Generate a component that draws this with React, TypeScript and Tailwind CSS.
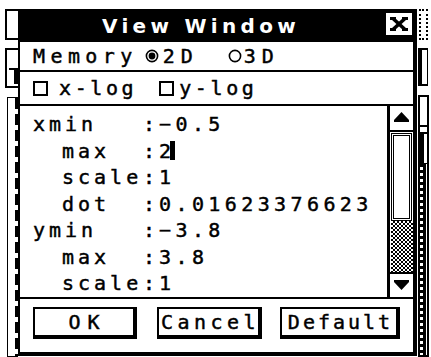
import React from "react";

const mono = "font-['DejaVu_Sans_Mono',monospace] [-webkit-text-stroke:0.45px_black]";

type Row = { label: string; indent: boolean; value: string; cursor?: boolean };

const rows: Row[] = [
  { label: "xmin", indent: false, value: "−0.5" },
  { label: "max", indent: true, value: "2", cursor: true },
  { label: "scale", indent: true, value: "1" },
  { label: "dot", indent: true, value: "0.01623376623" },
  { label: "ymin", indent: false, value: "−3.8" },
  { label: "max", indent: true, value: "3.8" },
  { label: "scale", indent: true, value: "1" },
];

function Radio({ on }: { on: boolean }) {
  return (
    <svg width="14" height="14" viewBox="0 0 14 14" className="shrink-0">
      <circle cx="7" cy="7" r="5.6" fill="white" stroke="black" strokeWidth="1.6" />
      {on && <circle cx="7" cy="7" r="3.4" fill="black" />}
    </svg>
  );
}

function CloseBox() {
  return (
    <div className="mt-[4px] mr-[1px] w-[26px] h-[22px] bg-white shrink-0">
      <svg width="26" height="22" viewBox="0 0 26 22">
        <line x1="7" y1="5.5" x2="19" y2="16.5" stroke="black" strokeWidth="3.6" />
        <line x1="19" y1="5.5" x2="7" y2="16.5" stroke="black" strokeWidth="3.6" />
        <rect x="4" y="4" width="6" height="3" fill="black" />
        <rect x="16" y="4" width="6" height="3" fill="black" />
        <rect x="4" y="15" width="6" height="3" fill="black" />
        <rect x="16" y="15" width="6" height="3" fill="black" />
      </svg>
    </div>
  );
}

function Scrollbar() {
  return (
    <div className="w-[26px] shrink-0 border-l-[3px] border-black flex flex-col">
      <div className="h-[26px] border-b-2 border-black shrink-0">
        <svg width="23" height="24" viewBox="0 0 23 24">
          <polygon points="11.5,6 19,14 4,14" fill="black" />
          <rect x="4" y="14" width="15" height="2" fill="black" />
        </svg>
      </div>
      <div className="flex-1 flex flex-col">
        <div className="h-[88px] ml-[1px] mr-[1px] mt-[1px] border border-black p-[1px] shrink-0">
          <div className="h-full border border-black bg-white" />
        </div>
        <div className="flex-1 ml-[1px] bg-[image:repeating-conic-gradient(#000_0_25%,#fff_0_50%)] bg-[length:4px_4px]" />
      </div>
      <div className="h-[25px] border-t-2 border-black shrink-0">
        <svg width="23" height="23" viewBox="0 0 23 23">
          <rect x="4" y="6" width="15" height="2" fill="black" />
          <polygon points="4,8 19,8 11.5,16" fill="black" />
        </svg>
      </div>
    </div>
  );
}

function Button({ label, w, track, ml }: { label: string; w: string; track: string; ml: string }) {
  return (
    <div
      className={`${w} ${ml} h-[32px] border-t-2 border-l-2 border-r-4 border-b-4 border-black flex items-center justify-center shrink-0`}
    >
      <span className={`${mono} text-[20px] leading-[26px] ${track}`}>{label}</span>
    </div>
  );
}

function LeftDeco() {
  return (
    <div className="w-[18px] shrink-0 flex flex-col">
      <div className="h-[9px] shrink-0" />
      <div className="h-[31px] ml-[5px] border-2 border-r-0 border-black shrink-0" />
      <div className="h-[8px] shrink-0" />
      <div className="h-[40px] ml-[5px] border-l-2 border-t-2 border-b-2 border-black flex flex-col shrink-0">
        <div className="h-[18px]" />
        <div className="flex-1 ml-[2px] border-t-2 border-black flex justify-end">
          <div className="w-[4px] h-[14px] bg-black" />
        </div>
      </div>
      <div className="h-[9px] shrink-0" />
      <div className="flex-1 ml-[7px] border-l border-t border-b border-black flex justify-end">
        <div className="w-[3px] h-full bg-[image:repeating-linear-gradient(to_bottom,#000_0_11px,transparent_11px_16px)]" />
      </div>
    </div>
  );
}

function RightDeco() {
  return (
    <div className="w-[14px] shrink-0 flex flex-col">
      <div className="h-[9px] shrink-0" />
      <div className="h-[31px] ml-[2px] w-[9px] border-2 border-dotted border-black shrink-0" />
      <div className="h-[8px] shrink-0" />
      <div className="h-[38px] ml-[1px] w-[10px] border-l-4 border-y-2 border-r border-black shrink-0" />
      <div className="h-[9px] shrink-0" />
      <div className="flex-1 ml-[1px] w-[11px] border-2 border-black flex flex-col">
        <div className="h-[30px] border-b-2 border-black shrink-0" />
        <div className="h-[7px] border-b-2 border-black shrink-0" />
        <div className="h-[30px] border-l-4 border-b border-black shrink-0" />
        <div className="flex-1 flex">
          <div className="w-[3px] h-full bg-[image:repeating-linear-gradient(to_bottom,#000_0_3px,transparent_3px_6px)]" />
          <div className="w-[3px] h-full bg-black" />
        </div>
      </div>
    </div>
  );
}

export default function App() {
  return (
    <div className="w-[431px] h-[357px] bg-white flex overflow-hidden text-black">
      <LeftDeco />
      <div className="mt-[9px] w-[399px] h-[347px] shrink-0 flex flex-col bg-white border-l-2 border-r-4 border-b-4 border-black">
        {/* Title bar */}
        <div className="h-[33px] bg-black flex items-start shrink-0">
          <div className="flex-1 h-full flex items-center justify-center pr-[4px]">
            <span className="font-['DejaVu_Sans',sans-serif] font-bold text-[20px] tracking-[4.3px] text-white leading-none">
              View Window
            </span>
          </div>
          <CloseBox />
        </div>

        {/* Memory row */}
        <div className={`h-[30px] border-b-2 border-black flex items-center pl-[13px] shrink-0 ${mono} text-[20px] leading-[26px]`}>
          <span className="tracking-[5.4px]">Memory</span>
          <span className="ml-[7px] flex"><Radio on={true} /></span>
          <span className="ml-[4px] tracking-[6px]">2D</span>
          <span className="ml-[29px] flex"><Radio on={false} /></span>
          <span className="ml-[2px] tracking-[6px]">3D</span>
        </div>

        {/* log row */}
        <div className={`h-[34px] border-b-2 border-black flex items-center pl-[13px] shrink-0 ${mono} text-[20px] leading-[26px]`}>
          <span className="w-[15px] h-[15px] border-2 border-black shrink-0" />
          <span className="ml-[11px] tracking-[3.6px]">x-log</span>
          <span className="ml-[22px] w-[15px] h-[15px] border-2 border-black shrink-0" />
          <span className="ml-[5px] tracking-[3.6px]">y-log</span>
        </div>

        {/* list */}
        <div className="h-[193px] border-b-2 border-black flex shrink-0">
          <div className={`flex-1 pt-[5px] pl-[13px] ${mono} text-[20px] leading-[26.5px]`}>
            {rows.map((r, i) => (
              <div key={i} className="flex h-[26.5px] whitespace-pre">
                <span className={`w-[110px] shrink-0 tracking-[4px] ${r.indent ? "pl-[29px]" : ""}`}>{r.label}</span>
                <span className="w-[16px] shrink-0">:</span>
                <span className="tracking-[4.4px] flex items-center">
                  {r.value}
                  {r.cursor && <span className="ml-[-5px] w-[5px] h-[19px] bg-black inline-block" />}
                </span>
              </div>
            ))}
          </div>
          <Scrollbar />
        </div>

        {/* buttons */}
        <div className="flex-1 flex items-start pt-[8px] pl-[13px]">
          <Button label="OK" w="w-[104px]" track="tracking-[7px] pl-[7px]" ml="" />
          <Button label="Cancel" w="w-[105px]" track="tracking-[4.5px] pl-[4px]" ml="ml-[20px]" />
          <Button label="Default" w="w-[120px]" track="tracking-[3px] pl-[3px]" ml="ml-[18px]" />
        </div>
      </div>
      <RightDeco />
    </div>
  );
}
